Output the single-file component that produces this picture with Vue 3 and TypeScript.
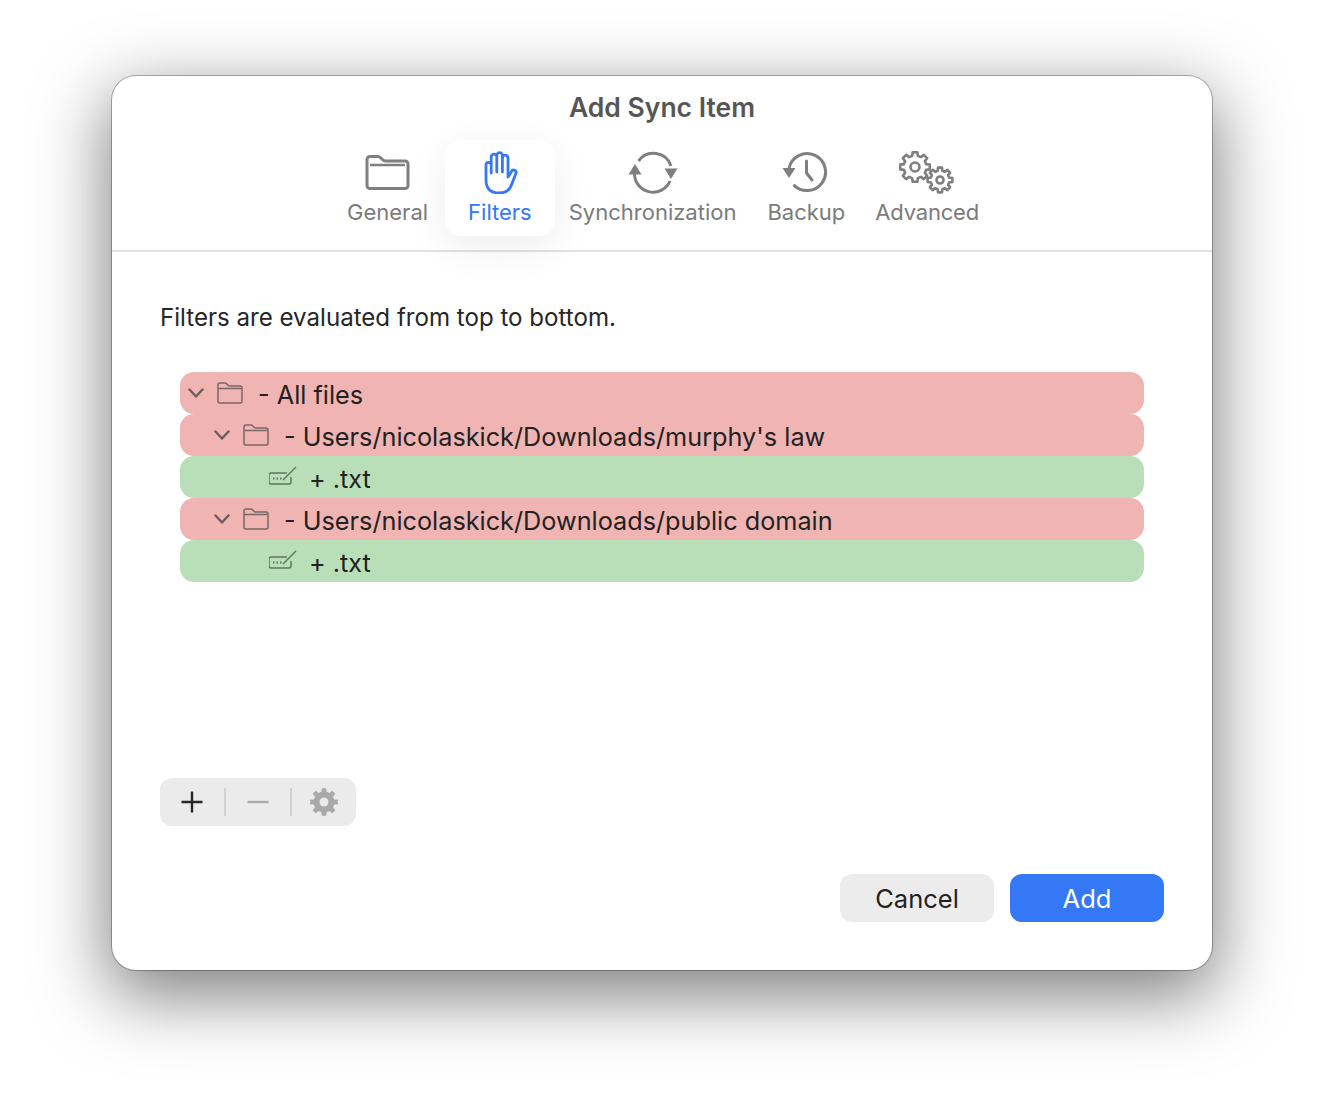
<template>
  <div class="page">
    <div class="window">
      <header class="toolbar">
        <h1 class="title">Add Sync Item</h1>
        <nav class="tabs">
          <div class="tab">
            <svg class="tab-icon" width="48" height="44" viewBox="1 0 48 44">
              <path d="M4 12 V9.500 a3 3 0 0 1 3-3 H15 a3 3 0 0 1 2.200 1 L20 10 a3 3 0 0 0 2.200 1 H42 a3 3 0 0 1 3 3 V35.500 a3 3 0 0 1-3 3 H7 a3 3 0 0 1-3-3 Z" fill="none" stroke="#7f7f7f" stroke-width="3" />
              <path d="M7 15 H42" stroke="#7f7f7f" stroke-width="2.500" />
            </svg>
            <span>General</span>
          </div>
          <div class="tab active">
            <svg class="tab-icon" width="36" height="44" viewBox="-1 0 36 44">
              <path d="M3 30 V15 a2.600 2.600 0 0 1 5.200 0 V23 M8.200 15 V7 a2.800 2.800 0 0 1 5.600 0 V22 M13.800 7 V5.500 a2.800 2.800 0 0 1 5.600 0 V22 M19.400 8 a2.800 2.800 0 0 1 5.600 0 V27 L28.500 21.500 a2.400 2.400 0 0 1 4.400 2 L28 36 C26 41 22 43 16 43 C8 43 3 39 3 30" fill="none" stroke="#3478f6" stroke-width="2.800" stroke-linecap="round" stroke-linejoin="round" />
            </svg>
            <span>Filters</span>
          </div>
          <div class="tab">
            <svg class="tab-icon" width="50" height="44" viewBox="0 0 50 44">
              <path d="M10.500 11 A18.500 18.500 0 0 1 43 16" fill="none" stroke="#7f7f7f" stroke-width="3" />
              <path d="M42 31 A18.500 18.500 0 0 1 6.500 24" fill="none" stroke="#7f7f7f" stroke-width="3" />
              <path d="M7 14 L13.500 24.500 H0.500 Z" fill="#7f7f7f" />
              <path d="M43 29 L36.500 18.500 H49.500 Z" fill="#7f7f7f" />
            </svg>
            <span>Synchronization</span>
          </div>
          <div class="tab">
            <svg class="tab-icon" width="48" height="44" viewBox="0 0 48 44">
              <path d="M7 18 A18.500 18.500 0 1 1 11.500 34.700" fill="none" stroke="#7f7f7f" stroke-width="3" />
              <path d="M24.500 11 V23 L30 30" fill="none" stroke="#7f7f7f" stroke-width="3" stroke-linecap="round" stroke-linejoin="round" />
              <path d="M0.500 18 H13.500 L7 28 Z" fill="#7f7f7f" />
            </svg>
            <span>Backup</span>
          </div>
          <div class="tab last">
            <svg class="tab-icon" width="56" height="44" viewBox="0 0 56 44">
              <path :d="gearPath(16, 17, 15, 11.500, 8)" fill="none" stroke="#7f7f7f" stroke-width="2.600" stroke-linejoin="round" />
              <circle cx="16" cy="17" r="4.500" fill="none" stroke="#7f7f7f" stroke-width="2.600" />
              <path :d="gearPath(41, 30, 12.500, 9.500, 8)" fill="none" stroke="#7f7f7f" stroke-width="2.600" stroke-linejoin="round" />
              <circle cx="41" cy="30" r="3.500" fill="none" stroke="#7f7f7f" stroke-width="2.600" />
            </svg>
            <span>Advanced</span>
          </div>
        </nav>
      </header>

      <main class="content">
        <p class="hint">Filters are evaluated from top to bottom.</p>

        <ul class="rules">
          <li
            v-for="(rule, i) in rules"
            :key="i"
            class="rule"
            :class="rule.kind"
            :style="{ paddingLeft: rule.indent + 'px' }"
          >
            <svg class="chevron" :class="{ hidden: rule.kind === 'include' }" width="16" height="10" viewBox="0 0 16 10">
              <path d="M1.500 1.500 L8 8.500 L14.500 1.500" fill="none" stroke="#6f5c5c" stroke-width="2.400" stroke-linecap="round" stroke-linejoin="round" />
            </svg>
            <svg v-if="rule.kind === 'exclude'" class="rule-icon folder" width="26" height="22" viewBox="0 0 26 22">
              <path d="M1 5 V3 a2 2 0 0 1 2-2 H8 a2 2 0 0 1 1.500 .7 L11 3.300 a2 2 0 0 0 1.500 .7 H23 a2 2 0 0 1 2 2 V19 a2 2 0 0 1-2 2 H3 a2 2 0 0 1-2-2 Z" fill="none" stroke="#7a6567" stroke-width="1.500" />
              <path d="M1.500 6.500 H24.500" stroke="#7a6567" stroke-width="1.500" />
            </svg>
            <svg v-else class="rule-icon pen" width="29" height="20" viewBox="1 0 29 20">
              <path d="M19 7 H3 a2 2 0 0 0-2 2 V16 a2 2 0 0 0 2 2 H21 a2 2 0 0 0 2-2 V11" fill="none" stroke="#5f755f" stroke-width="1.500" />
              <path d="M15 14 L28 1" stroke="#5f755f" stroke-width="1.500" />
              <path d="M5 12.500 H6.500 M8.500 12.500 H10 M12 12.500 H13.500" stroke="#5f755f" stroke-width="2" />
            </svg>
            <span class="rule-label">{{ rule.label }}</span>
          </li>
        </ul>

        <div class="list-actions">
          <button class="action">
            <svg width="22" height="22" viewBox="0 0 22 22"><path d="M11 0.500 V21.500 M0.500 11 H21.500" stroke="#262626" stroke-width="2.400" /></svg>
          </button>
          <span class="sep"></span>
          <button class="action">
            <svg width="22" height="22" viewBox="0 0 22 22"><path d="M0.500 11 H21.500" stroke="#ababab" stroke-width="2.400" /></svg>
          </button>
          <span class="sep"></span>
          <button class="action">
            <svg width="28" height="28" viewBox="0 0 28 28">
              <path :d="gearPath(14, 14, 14, 10.500, 8)" fill="#a9a9a9" />
              <circle cx="14" cy="14" r="4.500" fill="#ebebeb" />
            </svg>
          </button>
        </div>

        <div class="footer">
          <button class="btn">Cancel</button>
          <button class="btn primary">Add</button>
        </div>
      </main>
    </div>
  </div>
</template>

<script setup lang="ts">
interface Rule {
  kind: 'exclude' | 'include'
  indent: number
  label: string
}

const rules: Rule[] = [
  { kind: 'exclude', indent: 8, label: '- All files' },
  { kind: 'exclude', indent: 34, label: "- Users/nicolaskick/Downloads/murphy's law" },
  { kind: 'include', indent: 60, label: '+ .txt' },
  { kind: 'exclude', indent: 34, label: '- Users/nicolaskick/Downloads/public domain' },
  { kind: 'include', indent: 60, label: '+ .txt' },
]

// cog outline, teeth are trapezoids round the circle
function gearPath(cx: number, cy: number, outer: number, inner: number, teeth: number): string {
  const step = (Math.PI * 2) / teeth
  const pts: string[] = []
  for (let i = 0; i < teeth; i++) {
    const a = i * step - Math.PI / 2
    const at = (r: number, off: number) =>
      `${(cx + r * Math.cos(a + off * step)).toFixed(2)} ${(cy + r * Math.sin(a + off * step)).toFixed(2)}`
    pts.push(at(inner, -0.32), at(outer, -0.2), at(outer, 0.2), at(inner, 0.32))
  }
  return 'M' + pts.join(' L') + ' Z'
}
</script>

<style>
body {
  background: #fff;
}
</style>

<style scoped>
.page {
  box-sizing: border-box;
  height: 1118px;
  padding: 76px 112px 148px;
  overflow: hidden;
}

.window {
  box-sizing: border-box;
  height: 894px;
  display: flex;
  flex-direction: column;
  background: #fff;
  border-radius: 24px;
  box-shadow: 0 0 0 1px rgba(0, 0, 0, 0.28), 0 22px 70px 4px rgba(0, 0, 0, 0.5);
  font-family: Inter, "Liberation Sans", sans-serif;
  color: #222;
}

.toolbar {
  box-sizing: border-box;
  height: 176px;
  flex: none;
  border-bottom: 2px solid #e2e2e2;
  display: flex;
  flex-direction: column;
  align-items: center;
}

.title {
  margin: 14px 0 0;
  font-size: 26.500px;
  line-height: 34px;
  font-weight: 600;
  color: #565656;
}

.tabs {
  display: flex;
  margin: 16px 0 0 2px;
  height: 96px;
}

.tab {
  display: flex;
  flex-direction: column;
  align-items: center;
  height: 96px;
  padding: 10px 15.500px 0;
  box-sizing: border-box;
  font-size: 22px;
  line-height: 28px;
  color: #7b7b7b;
}

.tab-icon {
  display: block;
  margin-bottom: 4px;
}

.tab.active {
  color: #3478f6;
  background: #fff;
  border-radius: 16px;
  padding: 10px 23.500px 0;
  margin: 0 -2px 0 1px;
  box-shadow: 0 12px 40px rgba(0, 0, 0, 0.07);
}

.tab.last {
  margin-left: -1px;
  letter-spacing: -0.2px;
}

.content {
  flex: 1;
  display: flex;
  flex-direction: column;
  padding: 50px 48px 48px;
}

.hint {
  margin: 0;
  font-size: 24.100px;
  line-height: 32px;
  color: #262626;
}

.rules {
  list-style: none;
  margin: 38px 20px 0;
  padding: 0;
  height: 406px;
}

.rule {
  height: 42px;
  display: flex;
  align-items: center;
  border-radius: 14px;
  font-size: 25.250px;
  color: #222;
}

.rule.exclude {
  background: #f0b4b3;
}

.rule.include {
  background: #b9dfb9;
}

.chevron {
  flex: none;
  margin: 0 13px 0 0;
}

.chevron.hidden {
  visibility: hidden;
}

.rule-icon {
  flex: none;
  margin: 0 15px 1px 0;
}

.rule-icon.pen {
  margin: 0 11px 2px 0;
}

.rule-label {
  padding-top: 3px;
  white-space: nowrap;
}

.list-actions {
  align-self: flex-start;
  display: flex;
  align-items: center;
  width: 196px;
  height: 48px;
  background: #ebebeb;
  border-radius: 12px;
}

.action {
  flex: 1;
  display: flex;
  justify-content: center;
  align-items: center;
  padding: 0;
  border: 0;
  background: none;
}

.sep {
  flex: none;
  width: 2px;
  height: 28px;
  background: #d2d2d2;
}

.footer {
  margin-top: auto;
  display: flex;
  justify-content: flex-end;
  gap: 16px;
}

.btn {
  width: 154px;
  height: 48px;
  border: 0;
  border-radius: 12px;
  background: #ececec;
  font-family: inherit;
  font-size: 25.500px;
  color: #222;
}

.btn.primary {
  background: #3478f6;
  color: #fff;
}
</style>
